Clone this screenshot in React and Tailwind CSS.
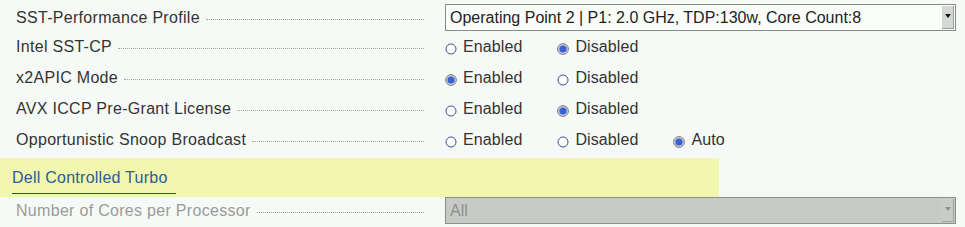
import React from 'react';

const font = { fontFamily: '"Liberation Sans", Arial, sans-serif' };

const Radio = ({ checked }) => (
    <svg width="12" height="12" viewBox="0 0 12 12" className="shrink-0 translate-y-[2px]">
        {checked ? (
            <>
                <circle cx="6" cy="6" r="5.4" fill="#c9ccd4" stroke="#7d8088" strokeWidth="1" />
                <circle cx="6" cy="6" r="3.6" fill="#3a60d8" />
            </>
        ) : (
            <circle cx="6" cy="6" r="5" fill="#ffffff" stroke="#35558f" strokeWidth="1" />
        )}
    </svg>
);

const RadioGroup = ({ options, value }) => (
    <div className="flex items-center gap-[35px]">
        {options.map((opt) => (
            <label key={opt} className="flex items-center gap-[6px] text-[16px] text-[#333] tracking-[0.1px]">
                <Radio checked={opt === value} />
                <span>{opt}</span>
            </label>
        ))}
    </div>
);

const Label = ({ text, disabled }) => (
    <div className="w-[445px] shrink-0 pl-4 pr-[21px] flex items-center">
        <span
            className={`text-[16px] tracking-[0.3px] whitespace-nowrap ${disabled ? 'text-[#9a9a9a]' : 'text-[#333]'}`}
        >
            {text}
        </span>
        <span className="flex-1 ml-[6px] mt-[3px] border-b border-dotted border-[#a3a3a3]" />
    </div>
);

const Select = ({ value, disabled }) => (
    <div
        className={`w-[511px] h-[27px] flex items-stretch border ${
            disabled ? 'bg-[#c7cac7] border-[#8c8f8c] text-[#8e918e]' : 'bg-[#fbfdfb] border-[#8a8a8a] text-[#222]'
        }`}
    >
        <span className="flex-1 pl-[4px] flex items-center text-[16px] whitespace-nowrap">{value}</span>
        <span
            className={`w-[12px] my-[1px] mr-[1px] flex justify-center pt-[8px] border-r border-b ${
                disabled ? 'bg-[#c9ccc9] border-[#a0a3a0]' : 'bg-[#d6d8d6] border-[#9a9c9a]'
            }`}
        >
            <svg width="6" height="4" viewBox="0 0 6 4">
                <polygon points="0,0 6,0 3,4" fill={disabled ? '#8e918e' : '#111'} />
            </svg>
        </span>
    </div>
);

const rows = [
    { label: 'Intel SST-CP', options: ['Enabled', 'Disabled'], value: 'Disabled' },
    { label: 'x2APIC Mode', options: ['Enabled', 'Disabled'], value: 'Enabled' },
    { label: 'AVX ICCP Pre-Grant License', options: ['Enabled', 'Disabled'], value: 'Disabled' },
    { label: 'Opportunistic Snoop Broadcast', options: ['Enabled', 'Disabled', 'Auto'], value: 'Auto' },
];

const App = () => {
    return (
        <div className="w-[965px] h-[227px] bg-[#f6faf7] overflow-hidden" style={font}>
            <div className="flex pt-[4px]">
                <Label text="SST-Performance Profile" />
                <Select value="Operating Point 2 | P1: 2.0 GHz, TDP:130w, Core Count:8" />
            </div>

            {rows.map((row) => (
                <div key={row.label} className="flex h-[31px] items-center">
                    <Label text={row.label} />
                    <RadioGroup options={row.options} value={row.value} />
                </div>
            ))}

            <div className="w-[719px] h-[39px] mt-[3px] bg-[#f1f7ae] pl-3 pt-[8px]">
                <span className="inline-block pr-2 pb-[5px] leading-[20px] text-[16px] tracking-[0.25px] text-[#2b5c9c] border-b-[1.5px] border-[#1d4f8f]">
                    Dell Controlled Turbo
                </span>
            </div>

            <div className="flex">
                <Label text="Number of Cores per Processor" disabled />
                <Select value="All" disabled />
            </div>
        </div>
    );
};

export default App;
